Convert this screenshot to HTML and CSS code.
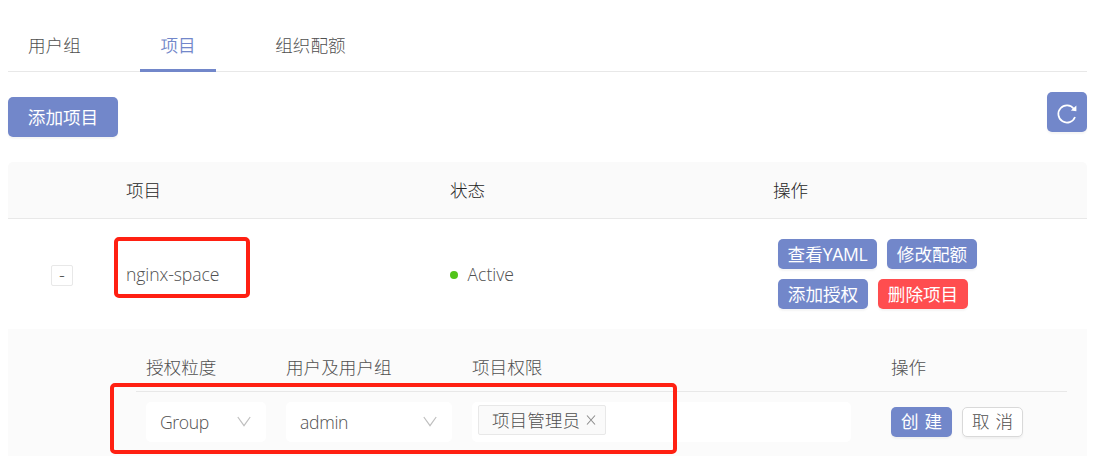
FILE: index.html
```html
<!DOCTYPE html>
<html lang="zh-CN">
<head>
<meta charset="utf-8">
<title>项目</title>
<link rel="stylesheet" href="styles.css">
</head>
<body>
<main class="page">
  <nav class="tabs">
    <a class="tab">用户组</a>
    <a class="tab tab-active">项目</a>
    <a class="tab">组织配额</a>
  </nav>

  <div class="toolbar">
    <button class="btn btn-primary btn-large">添加项目</button>
    <button class="btn btn-primary btn-icon" aria-label="刷新">
      <svg width="22" height="22" viewBox="0 0 22 22" fill="none" stroke="currentColor" stroke-width="1.7"><path d="M19 14A8.6 8.6 0 1 1 17.8 5.8"/><path d="M20.4 2.6v5.7l-5.6-.9z" fill="currentColor" stroke="none"/></svg>
    </button>
  </div>

  <section class="table">
    <div class="row head">
      <div></div><div class="cell">项目</div><div class="cell">状态</div><div class="cell">操作</div>
    </div>
    <div class="row body">
      <div class="expand-cell"><button class="expand">-</button></div>
      <div class="cell"><span class="latin name">nginx-space</span></div>
      <div class="cell status"><i class="dot"></i><span class="latin active">Active</span></div>
      <div class="cell actions">
        <button class="btn btn-primary yaml">查看<span class="yaml-text">YAML</span></button>
        <button class="btn btn-primary">修改配额</button>
        <button class="btn btn-primary">添加授权</button>
        <button class="btn btn-danger">删除项目</button>
      </div>
      <div class="mark mark-name"></div>
    </div>

    <div class="expanded">
      <div class="grant head-grant">
        <div>授权粒度</div><div>用户及用户组</div><div>项目权限</div><div>操作</div>
      </div>
      <div class="grant form-grant">
        <div class="select"><span class="latin group">Group</span><svg class="arrow" width="14" height="11" viewBox="0 0 14 11"><path d="M.8 1 7 9.6 13.2 1"/></svg></div>
        <div class="select"><span class="latin admin">admin</span><svg class="arrow" width="14" height="11" viewBox="0 0 14 11"><path d="M.8 1 7 9.6 13.2 1"/></svg></div>
        <div class="select select-multi"><span class="tag">项目管理员<svg class="close" width="10" height="10" viewBox="0 0 10 10"><path d="M1 .5 9 9.5M9 .5 1 9.5"/></svg></span></div>
        <div class="grant-actions">
          <button class="btn btn-primary pair">创 建</button>
          <button class="btn btn-default pair">取 消</button>
        </div>
      </div>
      <div class="mark mark-form"></div>
    </div>
  </section>
</main>
</body>
</html>
```
FILE: styles.css
```css
* { box-sizing: border-box; }
body {
  margin: 0;
  background: #fff;
  color: #505050;
  font-family: "Noto Sans CJK SC", sans-serif;
  font-size: 17.6px;
  font-weight: 300;
  line-height: 26px;
  overflow: hidden;
}
.page { height: 456px; padding: 0 10px 0 8px; overflow: hidden; }
.latin { font-family: "Open Sans", "Noto Sans", sans-serif; font-weight: 300; white-space: nowrap; }
.name { letter-spacing: -.1px; }
.group { letter-spacing: -.4px; }
.admin { letter-spacing: -.3px; }

.tabs { display: flex; gap: 39.6px; height: 72px; border-bottom: 1px solid #e8e8e8; }
.tab { height: 72px; padding: 32px 20px 0; white-space: nowrap; }
.tab-active { color: #7287ca; border-bottom: 3px solid #7287ca; font-weight: 350; }

.toolbar { display: flex; justify-content: space-between; height: 90px; padding-top: 20px; }
.btn {
  display: flex;
  align-items: center;
  justify-content: center;
  width: 90px;
  height: 30px;
  padding: 0;
  border: 0;
  border-radius: 5px;
  color: #fff;
  font: inherit;
  font-weight: 400;
  white-space: nowrap;
  box-shadow: 0 2px 2px rgba(0, 0, 0, .045);
}
.btn-primary { background: #7287ca; }
.btn-danger { background: #ff4d4f; }
.btn-default { background: #fff; color: #505050; border: 1px solid #d9d9d9; font-weight: 300; }
.btn-large { width: 110px; height: 40px; margin-top: 5px; }
.btn-icon { width: 40px; height: 40px; padding-top: 3px; }
.yaml { width: 99px; }
.yaml-text { font-family: "Open Sans", "Noto Sans", sans-serif; letter-spacing: -.35px; }
.pair { width: 61px; padding-bottom: 2px; word-spacing: 2px; }

.row { display: grid; grid-template-columns: 98px 324px 323px 334px; align-items: center; position: relative; }
.head { height: 57px; background: #fafafa; border-bottom: 1px solid #e8e8e8; border-radius: 5px 5px 0 0; color: #262626; }
.body { height: 110px; }
.cell { padding: 0 20px; }
.expand-cell { padding: 2px 0 0 43px; }
.expand {
  display: flex;
  align-items: center;
  justify-content: center;
  width: 22px;
  height: 21px;
  padding: 0 0 2px;
  border: 1px solid #e8e8e8;
  border-radius: 2px;
  background: #fff;
  color: #505050;
  font: inherit;
}
.status { display: flex; align-items: center; gap: 10px; padding-left: 19.5px; }
.dot { width: 8px; height: 8px; margin-top: 1px; border-radius: 50%; background: #52c41a; }
.actions { display: flex; flex-wrap: wrap; gap: 10px; padding-left: 25px; padding-right: 90px; }

.expanded { position: relative; height: 127px; padding: 12px 20px 0 128px; background: #fbfbfb; }
.grant { display: grid; grid-template-columns: 120px 166px 379px 1fr; column-gap: 20px; padding-left: 10px; }
.grant.form-grant { padding-top: 10px; }
.head-grant { height: 51px; padding-top: 13px; border-bottom: 1px solid #e8e8e8; }
.head-grant > :last-child, .grant-actions { margin-left: 20px; }
.select { display: flex; align-items: center; justify-content: space-between; height: 40px; padding: 0 15px 1px 14px; border-radius: 5px; background: #fff; }
.select-multi { justify-content: flex-start; align-items: flex-start; padding: 3px 6px; }
.tag { display: flex; align-items: center; gap: 6px; width: 128px; height: 30px; padding-left: 13px; border: 1px solid #e8e8e8; border-radius: 2px; background: #fafafa; white-space: nowrap; }
.arrow { fill: none; stroke: #bfbfbf; stroke-width: 1.2; }
.close { flex: none; fill: none; stroke: #8c8c8c; stroke-width: 1.1; }
.grant-actions { display: flex; gap: 10px; padding-top: 5px; }

.mark { position: absolute; border: 4px solid #ff2012; border-radius: 5px; pointer-events: none; }
.mark-name { left: 105.5px; top: 17.5px; width: 136px; height: 61px; }
.mark-form { left: 101.5px; top: 54px; width: 567px; height: 71px; }
```
